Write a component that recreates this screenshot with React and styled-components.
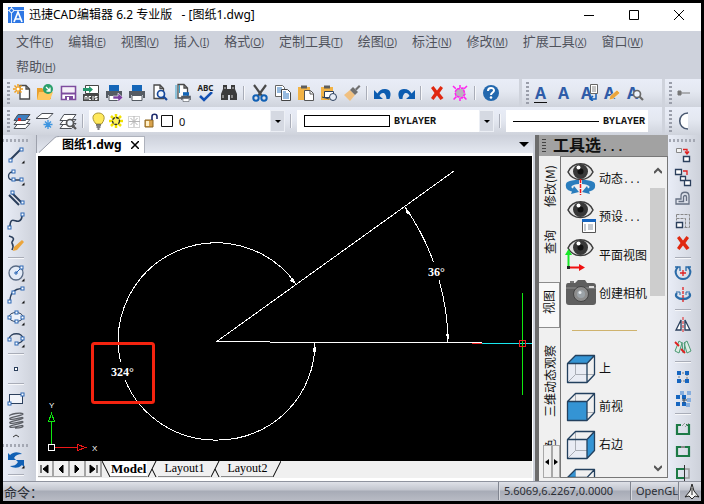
import React from "react";
import styled, { createGlobalStyle, css } from "styled-components";

const ink = "#2b3f5c";
const sky = "#3494d4";

/* ---------- icons ---------- */

const Icon = ({ w = 20, h = 20, children }) => (
  <svg width={w} height={h} viewBox={`0 0 ${w} ${h}`} fill="none" aria-hidden="true">
    {children}
  </svg>
);

const Nodes = ({ at }) =>
  at.map(([x, y]) => (
    <rect key={`${x}-${y}`} x={x - 1.5} y={y - 1.5} width="3" height="3" fill="#fff" stroke="#2a66b4" />
  ));

const Corner = () => <path d="M18.5 15.5v3H15.5z" fill="#111" />;

const Page = ({ x = 5, y = 3 }) => (
  <path
    d={`M${x} ${y}h6l3.5 3.5v10h-9.5z M${x + 6} ${y}v3.5h3.5`}
    fill="#fff"
    stroke="#4a4a4a"
    strokeWidth="1.3"
  />
);

const Printer = () => (
  <>
    <rect x="5" y="2" width="10" height="6" fill="#1466b8" />
    <path d="M2 8h16v7h-2v-3H4v3H2z" fill="#555b63" />
    <path d="M5 12.5h10v5H5z" fill="#fff" stroke="#555b63" />
  </>
);

const Sheets = ({ top = "#fff" }) => (
  <>
    <path d="M6 12.5h12l-4.5 5H2z" fill="#fff" stroke="#4b4f56" />
    <path d="M6 8.5h12l-4.5 5H2z" fill="#fff" stroke="#4b4f56" />
    <path d="M6 3.5h12l-4.5 6H2z" fill={top} stroke="#4b4f56" />
  </>
);

const Lens = ({ x, y, c = "#16489c" }) => (
  <>
    <circle cx={x} cy={y} r="3.5" stroke={c} strokeWidth="1.7" fill="#eef4fc" />
    <path d={`M${x + 2.5} ${y + 2.5}l3.5 3.5`} stroke={c} strokeWidth="2.2" />
  </>
);

const Clipboard = () => (
  <>
    <path d="M2 4h12v13H2z" fill="#f2b345" />
    <path d="M5 2.5h6v3H5z" fill="#5d5d5d" />
  </>
);

const LetterA = styled.span`
  color: #2f5ca8;
  font: bold 16px/18px "Noto Sans", sans-serif;
  border-bottom: 1px solid ${(p) => (p.$line ? "#111" : "transparent")};
  padding: 0 1px;
`;

const Overlay = styled.span`
  position: absolute;
  right: 0;
  bottom: 3px;
  display: flex;
`;

const Abc = styled.span`
  font: bold 8px/8px "Noto Sans", sans-serif;
  color: #222;
`;

const Stack = styled.span`
  display: flex;
  flex-direction: column;
  align-items: center;
`;

const NewIcon = () => (
  <Icon>
    <Page x={8} y={2.5} />
    <path d="M6 1v10M1 6h10M2.5 2.5l7 7M9.5 2.5l-7 7" stroke="#f0a020" strokeWidth="1.5" />
    <circle cx="6" cy="6" r="1.5" fill="#fff" />
  </Icon>
);
const OpenIcon = () => (
  <Icon>
    <path d="M2 5h5l2 2h7v9H2z" fill="#e89f2c" />
    <path d="M4 9h14l-3 8H2z" fill="#ffc861" />
    <circle cx="13" cy="6" r="5" fill="#2aa06c" />
    <path d="M11 4l4 4M15 4.5V8h-3.5" stroke="#fff" strokeWidth="1.3" />
  </Icon>
);
const SaveIcon = () => (
  <Icon>
    <path d="M3.5 3.5h14v13h-14z" fill="#fff" stroke="#7d4b9e" strokeWidth="1.6" />
    <path d="M5 5h11v4H5z" fill="#f4eff8" />
    <path d="M4 10.5h13" stroke="#7d4b9e" strokeWidth="2" />
    <path d="M7 13h8v4H7z" fill="#7d4b9e" />
    <path d="M9 14h2v3H9z" fill="#fff" />
  </Icon>
);
const AcisIcon = () => (
  <Icon>
    <path d="M4.5 2.5h13v8h-13z" fill="#fff" stroke="#444" />
    <path d="M2 5h6V3l4 3.5L8 10V8H2z" fill="#23966b" />
    <path d="M2 11h16v7H2z" fill="#474747" />
    <path d="M4 16.5v-3h2v3M10 13.5H8v3h2M12 13v4M16.5 13.5H14V15h2v1.5h-2" stroke="#fff" />
  </Icon>
);
const PrintIcon = () => (
  <Icon>
    <Printer />
  </Icon>
);
const PrintOutIcon = () => (
  <Icon>
    <Printer />
    <path d="M9 13h5v-3l5 4.5-5 4.5v-3H9z" fill="#7b3fa0" stroke="#fff" strokeWidth=".6" />
  </Icon>
);
const PreviewIcon = () => (
  <Icon>
    <Page x={4} y={2} />
    <Lens x={11} y={11} />
  </Icon>
);
const PlotIcon = () => (
  <Icon>
    <Page x={5} y={1.5} />
    <path d="M3 2v14M6.5 2v8" stroke="#3aa0c8" />
    <g transform="translate(7 8) scale(.6)">
      <Printer />
    </g>
  </Icon>
);
const SpellIcon = () => (
  <Stack>
    <Abc>ABC</Abc>
    <Icon h={10}>
      <path d="M4 4l4 4 8-8" stroke="#1150b4" strokeWidth="2.5" />
    </Icon>
  </Stack>
);
const FindIcon = () => (
  <Icon>
    <path d="M4 2h4v4h4V2h4v4l2 5v6h-7v-5H9v5H2v-6l2-5z" fill="#3b3b3b" />
    <path d="M4 12v3M13 12v3M5 5h2M13 5h2" stroke="#d5d5d5" />
  </Icon>
);
const CutIcon = () => (
  <Icon>
    <path d="M4 2l8 11M16 2L8 13" stroke="#4a4a4a" strokeWidth="2.2" />
    <circle cx="6" cy="15" r="2.7" stroke="#1160b4" strokeWidth="2" />
    <circle cx="14" cy="15" r="2.7" stroke="#1160b4" strokeWidth="2" />
  </Icon>
);
const CopyIcon = () => (
  <Icon>
    <path d="M2.5 2.5h7l2 2v9h-9z" fill="#fff" stroke="#666" />
    <path d="M4 5h5M4 7h5M4 9h5" stroke="#2e76c0" />
    <path d="M8.5 6.5h6l3 3v8h-9z" fill="#fff" stroke="#444" />
    <path d="M10 11h6M10 13h6M10 15h6M10 9h3" stroke="#2e76c0" />
  </Icon>
);
const PasteIcon = () => (
  <Icon>
    <Clipboard />
    <path d="M8.5 7.5h6l3 3v7h-9z" fill="#fff" stroke="#555" />
    <path d="M14 8v3h3" stroke="#555" />
  </Icon>
);
const PasteBlockIcon = () => (
  <Icon>
    <Clipboard />
    <path d="M5.5 8.5h9v6h-9z" fill="#fff" stroke={ink} />
    <circle cx="14" cy="14" r="3.5" stroke={ink} fill="#e6ecf6" />
    <path d="M3 14l7 2" stroke={ink} />
  </Icon>
);
const BrushIcon = () => (
  <Icon>
    <path d="M2 12l6-5 5 5-5 6z" fill="#f0c080" />
    <path d="M8 7l3-3 5 5-3 3z" fill="#707070" />
    <path d="M13 6l4-4 1.5 1.5-4 4z" fill="#707070" />
  </Icon>
);
const undoPath = "M1 7v9h9l-3.5-3C8 9 13 8 13.500 16h3C19 10 17 6 12 6 8 6 6 8 4.500 10.500z";
const UndoIcon = () => (
  <Icon>
    <path d={undoPath} fill="#0c5cb0" />
  </Icon>
);
const RedoIcon = () => (
  <Icon>
    <path d={undoPath} fill="#0c5cb0" transform="translate(20 0) scale(-1 1)" />
  </Icon>
);
const DeleteIcon = () => (
  <Icon>
    <path d="M4 5l2.5-2L10 7.5 13.5 3 16 5l-3.5 5 4 5-3 2-3.5-4.5L6.5 17 4 15l3.5-5z" fill="#e02810" />
  </Icon>
);
const PurgeIcon = () => (
  <Icon>
    <path d="M3 3l14 14M17 3L3 17M10 2v3M10 15v3" stroke="#ff20f0" strokeWidth="1.5" strokeDasharray="4 1" />
    <path d="M7 6l6-1 2 6-3 4-6-2-1-4z" fill="#b9b2bd" stroke="#ff20f0" strokeWidth="1.5" strokeDasharray="3 1" />
  </Icon>
);
const HelpIcon = () => (
  <Icon>
    <circle cx="10" cy="10" r="8" fill="#2368ae" />
    <path d="M7 8c0-4 6-4 6-.5 0 2-3 2-3 4.5" stroke="#fff" strokeWidth="2" />
    <circle cx="10" cy="14.5" r="1.3" fill="#fff" />
  </Icon>
);

const LayersIcon = () => (
  <Icon>
    <Sheets top="#3e7fc0" />
    <path d="M6 7h3v3H6z" fill="#e02020" />
  </Icon>
);
const LayerFreezeIcon = () => (
  <Icon>
    <path d="M7 2.5h11l-5 5H1z" fill="#fff" stroke="#4b4f56" />
    <path d="M13 9v9M8.5 13.5h9M10 10.5l6 6M16 10.5l-6 6" stroke="#3d95e0" strokeWidth="1.3" />
  </Icon>
);
const LayerFindIcon = () => (
  <Icon>
    <Sheets />
    <Lens x={12} y={12} c="#555" />
  </Icon>
);

const LineIcon = () => (
  <Icon>
    <path d="M4 15L15 4" stroke={ink} strokeWidth="2" />
    <Nodes at={[[4.5, 15.5], [15.5, 4.5]]} />
    <Corner />
  </Icon>
);
const PolylineIcon = () => (
  <Icon>
    <path d="M7 5c-6 0-6 8 0 8h8" stroke={ink} strokeWidth="1.3" />
    <Nodes at={[[7.5, 4.5], [7.5, 12.5], [15.5, 12.5]]} />
    <Corner />
  </Icon>
);
const MultilineIcon = () => (
  <Icon>
    <path d="M3 6l10 10M6 4l10 10" stroke={ink} strokeWidth="2" />
    <Nodes at={[[6.5, 3.5], [16.5, 13.5]]} />
  </Icon>
);
const SplineIcon = () => (
  <Icon>
    <path d="M4 16c0-12 6-4 9-6 3-1 3-4 3-6" stroke={ink} strokeWidth="1.6" />
    <Nodes at={[[3.5, 16.5], [16.5, 3.5]]} />
  </Icon>
);
const SketchIcon = () => (
  <Icon>
    <path d="M3 3c7 2 4 4 3 6s3 2 0 8" stroke={ink} strokeWidth="1.6" />
    <path d="M7 18l1-4 8-7 2 2-7 8z" fill="#eba53c" />
  </Icon>
);
const CircleIcon = () => (
  <Icon>
    <circle cx="10" cy="10" r="7" stroke="#596b85" strokeWidth="1.3" fill="#e4ecf8" />
    <path d="M10 10l5-5M8 10h4M10 8v4" stroke="#2a66b4" />
    <Nodes at={[[15.5, 4.5]]} />
    <Corner />
  </Icon>
);
const ArcIcon = () => (
  <Icon>
    <path d="M4 16C4 8 8 4 16 3.5" stroke={ink} strokeWidth="1.3" />
    <Nodes at={[[3.5, 16.5], [7.5, 7.5], [16.5, 3.5]]} />
    <Corner />
  </Icon>
);
const EllipseIcon = () => (
  <Icon>
    <ellipse cx="10" cy="10" rx="7" ry="4.5" stroke={ink} fill="#edf2fa" />
    <Nodes at={[[3.5, 10.5], [16.5, 10.5], [10.5, 5.5], [10.5, 14.5]]} />
    <Corner />
  </Icon>
);
const EllipseArcIcon = () => (
  <Icon>
    <path d="M3 10c1-7 14-7 14 0 0 3-3 4-7 5" stroke={ink} strokeWidth="1.3" />
    <Nodes at={[[3.5, 10.5], [16.5, 9.5], [10.5, 14.5]]} />
    <Corner />
  </Icon>
);
const PointIcon = () => (
  <Icon>
    <rect x="8.5" y="8.5" width="3" height="3" fill="#fff" stroke={ink} />
  </Icon>
);
const RectIcon = () => (
  <Icon>
    <rect x="3.5" y="5.5" width="13" height="9" fill="#f1f4fa" stroke={ink} />
    <Nodes at={[[3.5, 14.5], [16.5, 5.5]]} />
  </Icon>
);
const HelixIcon = () => (
  <Icon>
    <path
      d="M4 5C2 3 17 1 17 3S2 6 4 8s13-3 13-1S2 10 4 12s13-3 13-1S2 14 4 16s13-3 13-1-5 2-8 2"
      stroke="#5c5f66"
      strokeWidth="1.4"
    />
  </Icon>
);
const ChevronUp = () => (
  <Icon h={8}>
    <path d="M7 5l3-2 3 2" stroke="#333" />
  </Icon>
);
const RotateIcon = () => (
  <Icon>
    <path d="M2 10V3l2 2c4-4 9-3 12-1-4 0-6 1-8 4l2 2z" fill="#1160b4" />
    <path d="M18 10v7l-2-2c-4 4-9 3-12 1 4 0 6-1 8-4l-2-2z" fill="#1160b4" />
    <Corner />
  </Icon>
);

const RedHook = () => <path d="M10 4.5h4v4M12 6.5l2 2.5 2-2.5" stroke="#e02020" strokeWidth="1.3" />;

const CopyObjIcon = () => (
  <Icon>
    <path d="M3.5 3.5h5v4h-5z" stroke="#888" fill="#f4f4f4" />
    <path d="M10.5 11.5h6v5h-6z" stroke={ink} fill="#fff" strokeWidth="1.4" />
    <RedHook />
  </Icon>
);
const CopyManyIcon = () => (
  <Icon>
    <path d="M2.5 2.5h6v5h-6zM7.5 9.5h5v4h-5zM11.5 13.5h6v5h-6z" stroke={ink} fill="#fff" strokeWidth="1.3" />
    <path d="M10 4h4v4" stroke="#e02020" strokeWidth="1.3" />
  </Icon>
);
const OffsetIcon = () => (
  <Icon>
    <path d="M3 10h5V7c0-5 8-5 8 0v8H3zM5.5 12.5h5V8c0-2 3-2 3 0v4" stroke="#667083" strokeWidth="1.3" />
  </Icon>
);
const ScaleIcon = () => (
  <Icon>
    <path d="M3.5 3.5h13v13h-5M3.5 3.5v6M3.5 7.5h9v9" stroke="#888" strokeDasharray="3 1" />
    <path d="M3.5 11.5h6v5h-6z" fill="#fff" stroke={ink} strokeWidth="1.4" />
  </Icon>
);
const RotateObjIcon = () => (
  <Icon>
    <path d="M5 4c-5 5-1 12 5 12s10-7 5-12" stroke="#2a6ba8" strokeWidth="2" />
    <path d="M2 4h5v4M18 4h-5v4" stroke="#2a6ba8" strokeWidth="1.3" />
    <path d="M7 10h6M10 7v6" stroke="#e02020" strokeWidth="1.3" />
  </Icon>
);
const Rotate3dIcon = () => (
  <Icon>
    <path d="M4 8c-3 3 1 6 6 6s9-3 6-6" stroke="#2a6ba8" strokeWidth="2.3" />
    <path d="M3 7h4v3M17 7h-4v3" stroke="#2a6ba8" />
    <path d="M10 2v16" stroke="#e02020" strokeWidth="1.3" strokeDasharray="3 1" />
  </Icon>
);
const MirrorIcon = () => (
  <Icon>
    <path d="M8 5v10H3zM12 5v10h5z" stroke={ink} fill="#fff" strokeWidth="1.3" />
    <path d="M10 2v16" stroke="#e02020" strokeDasharray="3 1" />
  </Icon>
);
const Mirror3dIcon = () => (
  <Icon>
    <path d="M6 4l3 2-3 10-4-2zM14 4l-3 2 3 10 4-2z" stroke="#4c9a74" fill="#dcece4" />
    <path d="M9 5l1 11M12 5l-1 11" stroke="#4c9a74" />
    <path d="M2 5l4 4M8 12l4 4" stroke="#e02020" strokeWidth="1.8" />
  </Icon>
);
const DotGrid = ({ at, c }) => at.map(([x, y]) => <rect key={`${x}${y}`} x={x} y={y} width="4" height="4" fill={c} />);
const GroupIcon = () => (
  <Icon>
    <path d="M6 6h8v8H6z" stroke="#777" strokeDasharray="2 1" />
    <DotGrid c="#1565c0" at={[[4, 4], [12, 4], [4, 12], [12, 12]]} />
  </Icon>
);
const UngroupIcon = () => (
  <Icon>
    <DotGrid c="#86aede" at={[[7, 2], [14, 2], [14, 9], [13, 14]]} />
    <DotGrid c="#1565c0" at={[[3, 6], [9, 6], [3, 13], [9, 13]]} />
    <path d="M9 11h5M11 9v5" stroke="#345" />
  </Icon>
);
const BreakIcon = () => (
  <Icon>
    <path d="M8 6H4v9h12V6h-3" stroke="#1c7a46" strokeWidth="2.2" />
    <path d="M9 7l3-3M12 8l4-4" stroke="#999" />
  </Icon>
);
const BreakPointIcon = () => (
  <Icon>
    <path d="M8 6H4v9h12V6h-4" stroke="#1c7a46" strokeWidth="2.2" />
    <path d="M8 6h4" stroke="#888" strokeWidth="2" />
  </Icon>
);
const TrimIcon = () => (
  <Icon>
    <path d="M11 6H4v9h7" stroke="#1c7a46" strokeWidth="2" />
    <path d="M12 6h4v9h-4" stroke="#999" strokeWidth="1.5" />
    <path d="M11.5 2v16" stroke="#333" />
  </Icon>
);
const DimIcon = () => (
  <Icon>
    <path d="M4 10h12M4 8h3v4H4z" stroke="#777" fill="#777" />
  </Icon>
);
const HalfCircleIcon = () => (
  <Icon>
    <path d="M14 2C3 2 3 18 14 18" stroke="#4b5a72" strokeWidth="1.6" fill="#fff" />
  </Icon>
);

const LayerState = () => (
  <svg width="84" height="20" viewBox="0 0 84 20" fill="none" aria-hidden="true">
    <path d="M7 13C1 6 5 2 9.5 2S18 6 12.5 13z" fill="#ffe95c" stroke="#a89430" />
    <path d="M7 14h5M7.5 16h4M8.5 18h2" stroke="#555" strokeWidth="1.5" />
    <path d="M27 3v14M20 10h14M22 5l10 10M32 5L22 15" stroke="#f2e200" strokeWidth="2.5" />
    <circle cx="27" cy="10" r="3.5" fill="#fff45a" stroke="#333" strokeWidth="1.3" strokeDasharray="3 1" />
    <path d="M39.5 5.5h11v11h-11z" stroke="#aaa" strokeDasharray="1 1" />
    <path d="M45 5v11M40 10.5h11M41.5 7l7 7M48.5 7l-7 7" stroke="#b5b5b5" />
    <path d="M56 9h8v7h-8z" fill="#d8a24c" stroke="#8a6420" />
    <path d="M57 10h3v5h-3z" fill="#fff0c8" />
    <path d="M63 9V5.5c0-3 5-3 5 0V8" stroke="#1d2a6c" strokeWidth="1.6" />
    <path d="M72.5 4.5h11v11h-11z" fill="#fff" stroke="#111" />
  </svg>
);

const Eye = () => (
  <>
    <path d="M3 11C8 0 23 0 28 11 23 21 8 21 3 11z" fill="#e4e4e4" stroke="#3d3d3d" strokeWidth="1.5" />
    <circle cx="15.5" cy="10.5" r="7.5" fill="#383838" />
    <circle cx="15.5" cy="10.5" r="3" fill="#111" />
    <circle cx="13.5" cy="6.5" r="2" fill="#fff" />
  </>
);
const OrbitIcon = () => (
  <Icon w={32} h={36}>
    <Eye />
    <path
      d="M14 19C3 19 0 21 1 26c0 2 3 4 6 4.5L6 33l8-2-5-6-1 2.5c-3-1-2-4 6-4.5zM17 19c11 0 14 2 13 7 0 2-3 4-6 4.5l1 2.5-8-2 5-6 1 2.5c3-1 2-4-6-4.5z"
      fill="#2a7dbd"
    />
    <path d="M15.5 18v16" stroke="#f01818" strokeWidth="1.5" strokeDasharray="4 1" />
  </Icon>
);
const PresetIcon = () => (
  <Icon w={32} h={36}>
    <Eye />
    <path d="M17.5 21.5h13v12h-13z" fill="#fff" stroke="#555" />
    <path d="M17 20h14v3H17z" fill="#1565c0" />
    <path d="M23 26h5M23 28h5M23 30h5M20 25v7" stroke="#8893a0" />
  </Icon>
);
const PlanIcon = () => (
  <Icon w={32} h={36}>
    <Eye />
    <path d="M3.5 30V17" stroke="#18e828" strokeWidth="2" />
    <path d="M0 18l3.5-6L7 18z" fill="#18e828" />
    <path d="M4 30.5h11" stroke="#f01010" strokeWidth="2" />
    <path d="M14 27l6 3.5-6 3.5z" fill="#f01010" />
    <path d="M2 29h3v3H2z" fill="#222" />
  </Icon>
);
const CameraIcon = () => (
  <Icon w={32} h={36}>
    <path d="M3 8h7l3-3h7l2 3h6q3 0 3 3v16q0 3-3 3H4q-3 0-3-3V11q0-3 2-3z" fill="#5f5f5f" />
    <path d="M1 13h30M5 7h4" stroke="#777" strokeWidth="2" />
    <circle cx="16" cy="19" r="7.5" fill="#8d8d8d" stroke="#444" />
    <circle cx="16" cy="19" r="4" fill="#9ca3a8" />
    <circle cx="15" cy="17.5" r="1.5" fill="#e6eaec" />
    <path d="M24 11h5v2h-5z" fill="#ddd" />
  </Icon>
);

const faces = {
  top: "M2.5 13.5l8-8h19l-7.5 8z",
  front: "M2.5 13.5H22v19H2.5z",
  right: "M22 13.5l7.5-8v19l-7.5 8z",
  left: "M2.5 13.5l8-8v19l-8 8z",
};
const Cube = ({ face }) => (
  <Icon w={32} h={36}>
    <path d="M2.5 13.5H22v19H2.5z" fill="#e9ecf4" />
    <path d="M10.5 5.5v19h19M10.5 24.5l-8 8" stroke="#a9adb5" />
    <path d={faces[face]} fill={sky} />
    <path
      d="M2.5 13.5H22v19H2.5zM2.5 13.5l8-8h19l-7.5 8M29.5 5.5v19l-7.5 8"
      stroke="#23405e"
      strokeWidth="1.3"
      strokeLinejoin="round"
    />
  </Icon>
);

const LogoIcon = () => (
  <Icon w={16} h={16}>
    <path d="M0 0h16v16H0z" fill="#2f78e4" />
    <path d="M0 3.5h16M3.5 0v16" stroke="#dce9fb" />
    <path d="M6 15l4-10 4 10M7.5 12h5" stroke="#fff" strokeWidth="1.7" />
    <circle cx="3.5" cy="3.5" r="2" fill="#2f78e4" stroke="#fff" />
  </Icon>
);

/* ---------- layout ---------- */

const GlobalStyle = createGlobalStyle`
  * {
    box-sizing: border-box;
  }
  body {
    margin: 0;
    font-family: "Noto Sans", "Noto Sans CJK SC", sans-serif;
  }
  button, select {
    font: inherit;
    color: inherit;
    border: 0;
    margin: 0;
    padding: 0;
    background: transparent;
  }
  svg {
    display: block;
    flex: none;
  }
`;

const Window = styled.div`
  display: flex;
  flex-direction: column;
  height: 100vh;
  border: 3px solid #000;
  background: #cfd3dc;
  overflow: hidden;
`;

const TitleBar = styled.header`
  display: flex;
  align-items: center;
  flex: none;
  height: 28px;
  padding: 0 0 4px 5px;
  background: #fff;
`;

const Title = styled.h1`
  flex: 1;
  margin: 0 0 0 5px;
  font: 12px/20px "Noto Sans", "Noto Sans CJK SC", sans-serif;
  color: #000;
  white-space: pre;
`;

const WindowButton = styled.button`
  display: flex;
  justify-content: center;
  width: 45px;
`;

const MenuBar = styled.nav`
  display: flex;
  flex-wrap: wrap;
  align-content: flex-start;
  gap: 5px 15px;
  flex: none;
  min-height: 48px;
  padding: 0 40px 0 13px;
  background: #ced2dc;
`;

const MenuButton = styled.button`
  height: 20px;
  font-size: 13px;
  line-height: 20px;
  color: #50535c;
  small {
    font-size: 10px;
    line-height: 10px;
  }
`;

const ToolbarRow = styled.div`
  display: flex;
  flex: none;
  gap: 3px;
  height: 28px;
`;

const Toolbar = styled.div`
  display: flex;
  align-items: center;
  flex: ${(p) => p.$flex || "none"};
  width: ${(p) => p.$width || "auto"};
  padding-left: 4px;
  background: linear-gradient(#e9edf7, #e4e8f1 45%, #cfd3dc);
  overflow: hidden;
`;

const Grip = styled.span`
  flex: none;
  width: 3px;
  height: 22px;
  background: repeating-linear-gradient(#9a9eaa 0 2px, transparent 2px 4px);
`;

const GripH = styled.span`
  flex: none;
  width: 28px;
  height: 3px;
  margin: 4px 0 2px;
  background: repeating-linear-gradient(90deg, #a4a8b3 0 2px, transparent 2px 4px);
`;

const ToolButton = styled.button`
  position: relative;
  display: flex;
  align-items: center;
  justify-content: center;
  flex: none;
  width: 23px;
  height: 22px;
`;

const Separator = styled.span`
  flex: none;
  width: 2px;
  height: 14px;
  margin: 0 3px;
  background: #a9adb8;
  border-right: 1px solid #f6f7fa;
`;

const SeparatorH = styled.span`
  flex: none;
  width: 16px;
  height: 2px;
  margin: 3px 0;
  background: #a9adb8;
  border-bottom: 1px solid #f6f7fa;
`;

const Combo = styled.label`
  display: flex;
  align-items: center;
  flex: ${(p) => p.$flex};
  min-width: 0;
  height: 22px;
  margin: 0 ${(p) => (p.$last ? "14px" : "2px")} 0 2px;
  padding-left: ${(p) => p.$pad};
  background: #fff;
`;

const ComboSelect = styled.select`
  appearance: none;
  flex: 1;
  min-width: 0;
  height: 22px;
  padding-left: ${(p) => p.$pad || "4px"};
  font: ${(p) => (p.$mono ? 'bold 10px "Liberation Mono", monospace' : '11px "Noto Sans", sans-serif')};
  color: #111;
`;

const ComboArrow = styled.span`
  display: flex;
  align-items: center;
  justify-content: center;
  width: 15px;
  height: 22px;
  border: 1px solid #eceff5;
  background: #d5d9e2;
  pointer-events: none;
`;

const ColorSwatch = styled.span`
  flex: none;
  width: 86px;
  height: 12px;
  border: 1px solid #000;
`;

const LineSample = styled.span`
  flex: none;
  width: 86px;
  height: 1px;
  background: #000;
`;

const Body = styled.div`
  display: flex;
  flex: 1;
  min-height: 0;
`;

const SideBar = styled.div`
  display: flex;
  flex-direction: column;
  align-items: center;
  flex: none;
  width: 33px;
  padding-right: ${(p) => (p.$left ? "8px" : "4px")};
  background: linear-gradient(90deg, #e9edf7, #cdd1da);
  overflow: hidden;
`;

const Document = styled.main`
  display: flex;
  flex-direction: column;
  flex: 1;
  min-width: 0;
  padding-right: 2px;
`;

const TabStrip = styled.div`
  display: flex;
  align-items: flex-end;
  justify-content: space-between;
  height: 18px;
  flex: none;
  background: linear-gradient(#ccd0da, #e4e8f0);
  border-left: 1px solid #9da1ac;
`;

const DocTab = styled.div`
  display: flex;
  align-items: center;
  height: 17px;
`;

const DocTabBody = styled.div`
  display: flex;
  align-items: center;
  gap: 9px;
  height: 17px;
  padding: 0 5px 0 3px;
  background: #fff;
  border-top: 1px solid #aeb2bc;
  border-right: 1px solid #aeb2bc;
  font: bold 12px/16px "Noto Sans", "Noto Sans CJK SC", sans-serif;
`;

const TabMenuButton = styled.button`
  display: flex;
  align-items: center;
  height: 17px;
  margin-right: 4px;
`;

const Sheet = styled.div`
  display: flex;
  flex-direction: column;
  flex: 1;
  min-height: 0;
  border: solid #fff;
  border-width: 3px 1px 3px 2px;
  background: #000;
`;

const Drawing = styled.svg`
  width: 100%;
  flex: 1 1 0;
  min-height: 0;
  background: #000;
`;

const LayoutBar = styled.div`
  display: flex;
  flex: none;
  height: 17px;
  background: #f0f0f0;
  color: #000;
`;

const NavButton = styled.button`
  display: flex;
  align-items: center;
  justify-content: center;
  width: 16px;
  height: 16px;
  border-right: 2px solid #a5a5a5;
  border-bottom: 1px solid #a5a5a5;
`;

const LayoutTab = styled.button`
  height: 16px;
  border-bottom: 1px solid #888;
  background: ${(p) => (p.$active ? "#fff" : "transparent")};
  font: ${(p) => (p.$active ? "bold 13px" : "12px")} / 15px "Liberation Serif", serif;
  padding: 0 ${(p) => (p.$active ? "1px" : "6px")};
`;

const Palette = styled.aside`
  display: flex;
  flex-direction: column;
  flex: none;
  width: 133px;
  border-left: 4px solid #6c6c6c;
  background: #f0f0f0;
`;

const PaletteTitle = styled.h2`
  display: flex;
  align-items: center;
  gap: 7px;
  flex: none;
  height: 21px;
  margin: 0;
  padding-left: 3px;
  background: #a2a2a2;
  font: bold 16px/20px "Noto Sans CJK SC", sans-serif;
  color: #111;
`;

const Dots = styled.span`
  font-family: "Liberation Mono", monospace;
  font-size: ${(p) => p.$size};
`;

const TitleGrip = styled.span`
  width: 4px;
  height: 14px;
  background: repeating-linear-gradient(#444 0 1px, transparent 1px 3px);
`;

const PaletteBody = styled.div`
  display: flex;
  flex: 1;
  min-height: 0;
  padding-bottom: 3px;
`;

const SideTabs = styled.div`
  display: flex;
  flex-direction: column;
  width: 21px;
  min-height: 0;
`;

const SideTabList = styled.div`
  flex: 1 1 0;
  min-height: 0;
  overflow: hidden;
`;

const SideTab = styled.button`
  display: block;
  width: 21px;
  height: ${(p) => p.$height};
  padding: ${(p) => p.$pad || "0"};
  writing-mode: vertical-rl;
  text-orientation: sideways;
  text-align: center;
  transform: rotate(180deg);
  font: 12px/20px "Noto Sans CJK SC", sans-serif;
  color: #111;
  white-space: nowrap;
  ${(p) =>
    p.$active &&
    css`
      background: #f8f8f8;
      border: solid #8c8c8c;
      border-width: 1px 0 1px 1px;
    `}
`;

const TabScroll = styled.div`
  display: grid;
  grid-template-columns: 1fr 1fr;
  flex: none;
  height: 33px;
  padding-left: 4px;
`;

const ScrollArrow = styled.button`
  display: flex;
  align-items: center;
  justify-content: center;
  border: 1px solid #a8a8a8;
`;

const ToolList = styled.div`
  display: flex;
  flex: 1;
  min-width: 0;
  border: 1px solid #777;
  overflow: hidden;
`;

const ToolItems = styled.div`
  flex: 1;
  min-width: 0;
  padding: 3px 0 0 4px;
`;

const ToolItem = styled.button`
  display: flex;
  align-items: center;
  gap: 2px;
  height: 38px;
  font: 12px/16px "Noto Sans CJK SC", sans-serif;
  color: #111;
  white-space: nowrap;
`;

const Divider = styled.hr`
  width: 65px;
  height: 1px;
  margin: 18px 0 18px 7px;
  border: 0;
  background: #cfb36e;
`;

const ScrollBar = styled.div`
  display: flex;
  flex-direction: column;
  align-items: center;
  flex: none;
  width: 17px;
  padding-right: 2px;
`;

const ScrollButton = styled.button`
  display: flex;
  align-items: center;
  justify-content: center;
  flex: none;
  width: 15px;
  height: ${(p) => p.$height};
`;

const ScrollTrack = styled.div`
  flex: 1;
  width: 15px;
`;

const ScrollThumb = styled.div`
  width: 15px;
  height: 40%;
  background: #cdcdcd;
`;

const StatusBar = styled.footer`
  display: flex;
  align-items: center;
  flex: none;
  height: 20px;
  background: linear-gradient(#8f939e 0 1px, #dfe1e8 1px, #c2c5ce 45%, #a7abb6 50%, #b9bcc5);
  font-size: 11px;
  color: #2b2e35;
`;

const Prompt = styled.span`
  flex: 1;
  padding-left: 1px;
  font-size: 13px;
`;

const StatusCell = styled.span`
  height: 18px;
  line-height: 18px;
  width: ${(p) => p.$width};
  padding-left: 5px;
  border-left: 1px solid #80848f;
  box-shadow: inset 1px 0 #d8dae0;
  overflow: hidden;
`;

/* ---------- data ---------- */

const menus = [
  ["文件", "F"],
  ["编辑", "E"],
  ["视图", "V"],
  ["插入", "I"],
  ["格式", "O"],
  ["定制工具", "T"],
  ["绘图", "D"],
  ["标注", "N"],
  ["修改", "M"],
  ["扩展工具", "X"],
  ["窗口", "W"],
  ["帮助", "H"],
];

const standardTools = [
  ["新建", NewIcon],
  ["打开", OpenIcon],
  ["保存", SaveIcon],
  ["ACIS", AcisIcon],
  ["输出", PrintOutIcon],
  ["打印", PrintIcon],
  ["打印预览", PreviewIcon],
  ["页面设置", PlotIcon],
  ["拼写检查", SpellIcon],
  ["查找", FindIcon],
  null,
  ["剪切", CutIcon],
  ["复制", CopyIcon],
  ["粘贴", PasteIcon],
  ["粘贴为块", PasteBlockIcon],
  ["特性匹配", BrushIcon],
  null,
  ["撤销", UndoIcon],
  ["重做", RedoIcon],
  null,
  ["删除", DeleteIcon],
  ["清理", PurgeIcon],
  null,
  ["帮助", HelpIcon],
];

const layerTools = [
  ["图层", LayersIcon],
  ["冻结图层", LayerFreezeIcon],
  ["查找图层", LayerFindIcon],
];

const drawTools = [
  ["直线", LineIcon],
  ["多段线", PolylineIcon],
  ["多线", MultilineIcon],
  ["样条曲线", SplineIcon],
  ["徒手画", SketchIcon],
  null,
  ["圆", CircleIcon],
  ["圆弧", ArcIcon],
  ["椭圆", EllipseIcon],
  ["椭圆弧", EllipseArcIcon],
  null,
  ["点", PointIcon],
  null,
  ["矩形", RectIcon],
  ["螺旋", HelixIcon],
];

const modifyTools = [
  ["复制对象", CopyObjIcon],
  ["阵列", CopyManyIcon],
  ["偏移", OffsetIcon],
  ["缩放", ScaleIcon],
  ["删除对象", DeleteIcon],
  null,
  ["旋转", RotateObjIcon],
  ["三维旋转", Rotate3dIcon],
  null,
  ["镜像", MirrorIcon],
  ["三维镜像", Mirror3dIcon],
  null,
  ["组", GroupIcon],
  ["解组", UngroupIcon],
  null,
  ["打断", BreakIcon],
  ["打断于点", BreakPointIcon],
  ["修剪", TrimIcon],
];

const viewTools = [
  ["动态", OrbitIcon, true],
  ["预设", PresetIcon, true],
  ["平面视图", PlanIcon],
  ["创建相机", CameraIcon],
];

const cubeTools = [
  ["上", "top"],
  ["前视", "front"],
  ["右边", "right"],
];

/* ---------- parts ---------- */

function Tools({ items, vertical }) {
  return items.map((item, i) => {
    if (!item) return vertical ? <SeparatorH key={i} /> : <Separator key={i} />;
    const [name, Glyph] = item;
    return (
      <ToolButton key={name} aria-label={name}>
        <Glyph />
      </ToolButton>
    );
  });
}

const DownArrow = ({ w = 6 }) => (
  <svg width={w} height={w / 2} viewBox="0 0 6 3" aria-hidden="true">
    <path d="M0 0h6L3 3z" fill="#000" />
  </svg>
);

const TextTools = () => (
  <>
    <ToolButton aria-label="多行文字">
      <LetterA $line>A</LetterA>
    </ToolButton>
    <ToolButton aria-label="单行文字">
      <LetterA>A</LetterA>
    </ToolButton>
    <ToolButton aria-label="文字样式">
      <LetterA>A</LetterA>
      <Overlay>
        <Icon w={10} h={18}>
          <path d="M2.5 1.5h7v9h-7z" fill="#fff" stroke="#666" />
          <path d="M4 4h4M4 6h4M4 8h4" stroke="#888" />
          <path d="M8 11v5H3M5 13l-3 3 3 2" stroke="#1760b8" strokeWidth="1.5" />
        </Icon>
      </Overlay>
    </ToolButton>
    <ToolButton aria-label="编辑文字">
      <LetterA>A</LetterA>
      <Overlay>
        <Icon w={13} h={12}>
          <path d="M1 11l1-4 7-6 3 3-7 6z" fill="#eba53c" stroke="#fff" strokeWidth=".5" />
        </Icon>
      </Overlay>
    </ToolButton>
    <ToolButton aria-label="查找文字">
      <LetterA>A</LetterA>
      <Overlay>
        <Icon w={12} h={12}>
          <Lens x={5} y={5} c="#6a6a6a" />
        </Icon>
      </Overlay>
    </ToolButton>
  </>
);

const AngleDrawing = () => (
  <Drawing role="img" aria-label="36° 324°">
    <g transform="translate(-38 -156)" fill="none" stroke="#fff" shapeRendering="crispEdges">
      <path d="M216 342L454 171" />
      <path d="M216 341.5h54M270 342.5h212" />
      <path d="M472 343.5h10" stroke="#f02020" />
      <path d="M482 343.5h2000" stroke="#18e8f0" />
      <path d="M296 284A98 98 0 0 0 120.5 362M125 380A98 98 0 0 0 219 440A97 97 0 0 0 315 343" />
      <path d="M405 207A231 231 0 0 1 433.5 262M439 280A231 231 0 0 1 448 342" />
      <g fill="#fff" stroke="none">
        <path d="M296.5 284.5l-7-4 3-3zM315 343.5l-2.5 8h3.5zM405 207.5l2 7 3-2zM448 342l-2-8h3.5z" />
      </g>
      <path d="M522.5 293v102" stroke="#10e810" />
      <path d="M519.5 340.5h6v6h-6z" stroke="#f02020" />
      <path d="M51.5 444v-22M48.5 421.5h6l-3-8z" stroke="#10e810" />
      <path d="M55 447.5h22M77.5 444.5v6l8-3z" stroke="#f01818" />
      <path d="M48.5 444.5h6v6h-6z" />
      <rect x="92.5" y="343.5" width="61" height="59" rx="2" stroke="#f5230f" strokeWidth="3" shapeRendering="auto" />
    </g>
    <g transform="translate(-38 -156)" fill="#fff" fontFamily="Liberation Serif, serif" fontWeight="bold" fontSize="12">
      <text x="111" y="376">324°</text>
      <text x="428" y="276">36°</text>
      <g fontFamily="Liberation Sans, sans-serif" fontWeight="normal" fontSize="8">
        <text x="49" y="408">Y</text>
        <text x="92" y="451">X</text>
      </g>
    </g>
  </Drawing>
);

const navPaths = ["M1 1v8M8 1v8L3 5z", "M7 1v8L3 5z", "M3 1v8l4-4z", "M2 1v8l5-4zM9 1v8"];

const Slant = ({ open, close }) => (
  <svg width={open && close ? 11 : 8} height="16" viewBox={open && close ? "0 0 11 16" : "0 0 8 16"} fill="none" aria-hidden="true">
    {open && close ? (
      <path d="M1 16L9 0M5 8l4 8" stroke="#000" />
    ) : (
      <path d={open ? "M0 0l8 16" : "M0 16L8 0"} stroke="#000" />
    )}
  </svg>
);

export default function App() {
  return (
    <>
      <GlobalStyle />
      <Window>
        <TitleBar>
          <LogoIcon />
          <Title>{"迅捷CAD编辑器 6.2 专业版   - [图纸1.dwg]"}</Title>
          <WindowButton aria-label="最小化">
            <Icon w={10} h={10}>
              <path d="M0 5.5h10" stroke="#000" />
            </Icon>
          </WindowButton>
          <WindowButton aria-label="最大化">
            <Icon w={10} h={10}>
              <path d="M.5.5h9v9h-9z" stroke="#000" />
            </Icon>
          </WindowButton>
          <WindowButton aria-label="关闭">
            <Icon w={10} h={10}>
              <path d="M0 0l10 10M10 0L0 10" stroke="#000" />
            </Icon>
          </WindowButton>
        </TitleBar>

        <MenuBar>
          {menus.map(([name, key]) => (
            <MenuButton key={name}>
              {name}
              <small>
                (<u>{key}</u>)
              </small>
            </MenuButton>
          ))}
        </MenuBar>

        <ToolbarRow>
          <Toolbar $flex="1">
            <Grip />
            <Tools items={standardTools} />
          </Toolbar>
          <Toolbar $width="140px">
            <Grip />
            <TextTools />
          </Toolbar>
          <Toolbar $width="36px">
            <Grip />
            <ToolButton aria-label="标注线">
              <DimIcon />
            </ToolButton>
          </Toolbar>
        </ToolbarRow>

        <ToolbarRow>
          <Toolbar $flex="1">
            <Grip />
            <Tools items={layerTools} />
            <Separator />
            <Combo $flex="196 1 196px" $pad="0">
              <LayerState />
              <ComboSelect $pad="6px" aria-label="图层">
                <option>0</option>
              </ComboSelect>
              <ComboArrow>
                <DownArrow />
              </ComboArrow>
            </Combo>
            <Separator />
            <Combo $flex="197 1 197px" $pad="7px">
              <ColorSwatch />
              <ComboSelect $mono aria-label="颜色">
                <option>BYLAYER</option>
              </ComboSelect>
              <ComboArrow>
                <DownArrow />
              </ComboArrow>
            </Combo>
            <Separator />
            <Combo $flex="142 1 142px" $pad="7px" $last>
              <LineSample />
              <ComboSelect $mono aria-label="线型">
                <option>BYLAYER</option>
              </ComboSelect>
            </Combo>
          </Toolbar>
          <Toolbar $width="36px">
            <Grip />
            <ToolButton aria-label="圆弧标注">
              <HalfCircleIcon />
            </ToolButton>
          </Toolbar>
        </ToolbarRow>

        <Body>
          <SideBar $left>
            <GripH />
            <Tools items={drawTools} vertical />
            <ChevronUp />
            <GripH />
            <ToolButton aria-label="刷新">
              <RotateIcon />
            </ToolButton>
            <SeparatorH />
          </SideBar>

          <Document>
            <TabStrip>
              <DocTab>
                <svg width="22" height="17" viewBox="0 0 22 17" aria-hidden="true">
                  <path d="M2 17L18 1.5Q19 .5 22 .5V17z" fill="#fff" />
                  <path d="M2 16.5L18 1.5Q19 .5 22 .5" fill="none" stroke="#9a9eaa" />
                </svg>
                <DocTabBody>
                  图纸1.dwg
                  <button aria-label="关闭图纸">
                    <Icon w={8} h={8}>
                      <path d="M0 0l8 8M8 0L0 8" stroke="#000" strokeWidth="1.5" />
                    </Icon>
                  </button>
                </DocTabBody>
              </DocTab>
              <TabMenuButton aria-label="图纸列表">
                <DownArrow w={10} />
              </TabMenuButton>
            </TabStrip>
            <Sheet>
              <AngleDrawing />
              <LayoutBar>
                {navPaths.map((d, i) => (
                  <NavButton key={d} aria-label={["第一个", "上一个", "下一个", "最后一个"][i]}>
                    <Icon w={10} h={10}>
                      <path d={d} fill="#000" stroke="#000" />
                    </Icon>
                  </NavButton>
                ))}
                <Slant open />
                <LayoutTab $active>Model</LayoutTab>
                <Slant open close />
                <LayoutTab>Layout1</LayoutTab>
                <Slant open close />
                <LayoutTab>Layout2</LayoutTab>
                <Slant close />
              </LayoutBar>
            </Sheet>
          </Document>

          <Palette>
            <PaletteTitle>
              <TitleGrip />
              <span>
                工具选<Dots $size="13px">...</Dots>
              </span>
            </PaletteTitle>
            <PaletteBody>
              <SideTabs>
                <SideTabList>
                  <SideTab $height="60px">修改(M)</SideTab>
                  <SideTab $height="66px" $pad="14px 0 0">
                    查询
                  </SideTab>
                  <SideTab $height="46px" $pad="6px 0 0" $active>
                    视图
                  </SideTab>
                  <SideTab $height="106px">三维动态观察</SideTab>
                  <SideTab $height="34px">着色</SideTab>
                </SideTabList>
                <TabScroll>
                  <ScrollArrow aria-label="上一页">
                    <svg width="4" height="6" viewBox="0 0 4 6">
                      <path d="M4 0v6L0 3z" />
                    </svg>
                  </ScrollArrow>
                  <ScrollArrow aria-label="下一页">
                    <svg width="4" height="6" viewBox="0 0 4 6">
                      <path d="M0 0v6l4-3z" />
                    </svg>
                  </ScrollArrow>
                </TabScroll>
              </SideTabs>
              <ToolList>
                <ToolItems>
                  {viewTools.map(([name, Glyph, cut]) => (
                    <ToolItem key={name}>
                      <Glyph />
                      <span>
                        {name}
                        {cut && <Dots $size="10px">...</Dots>}
                      </span>
                    </ToolItem>
                  ))}
                  <Divider />
                  {cubeTools.map(([name, face]) => (
                    <ToolItem key={name}>
                      <Cube face={face} />
                      <span>{name}</span>
                    </ToolItem>
                  ))}
                  <ToolItem aria-label="左边">
                    <Cube face="left" />
                  </ToolItem>
                </ToolItems>
                <ScrollBar>
                  <ScrollButton $height="31px" aria-label="向上滚动">
                    <Icon w={8} h={16}>
                      <path d="M0 8l4-4 4 4" stroke="#555" strokeWidth="2" />
                    </Icon>
                  </ScrollButton>
                  <ScrollTrack>
                    <ScrollThumb />
                  </ScrollTrack>
                  <ScrollButton $height="18px" aria-label="向下滚动">
                    <Icon w={8} h={8}>
                      <path d="M0 2l4 4 4-4" stroke="#555" strokeWidth="2" />
                    </Icon>
                  </ScrollButton>
                </ScrollBar>
              </ToolList>
            </PaletteBody>
          </Palette>

          <SideBar>
            <GripH />
            <Tools items={modifyTools} vertical />
          </SideBar>
        </Body>

        <StatusBar>
          <Prompt>命令：</Prompt>
          <StatusCell $width="132px">5.6069,6.2267,0.0000</StatusCell>
          <StatusCell $width="48px">OpenGL</StatusCell>
          <StatusCell $width="23px">
            <Icon w={16} h={18}>
              <path d="M8 2l2 7 5 6-4-1-3 3-3-3-4 1 5-6z" fill="#f4f4f4" stroke="#222" />
              <path d="M8 6v7" stroke="#222" />
            </Icon>
          </StatusCell>
        </StatusBar>
      </Window>
    </>
  );
}
